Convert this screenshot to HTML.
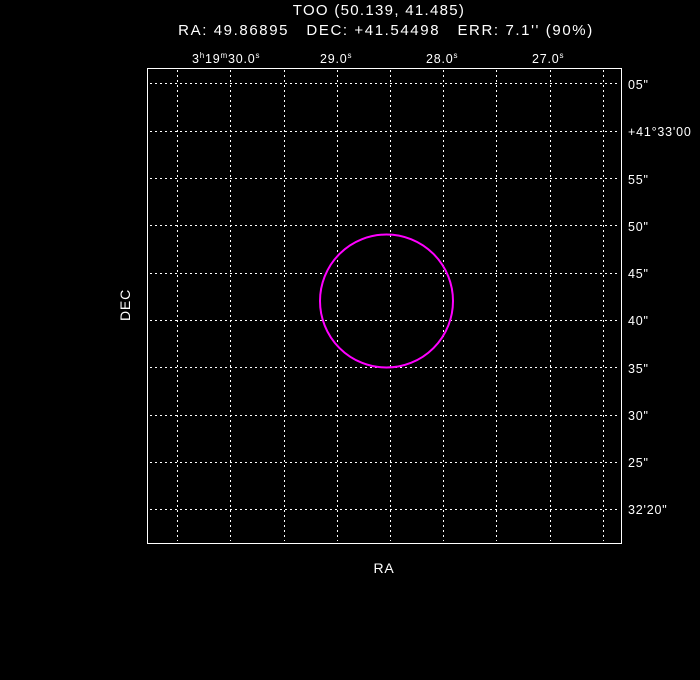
<!DOCTYPE html>
<html><head><style>
html,body{margin:0;padding:0;background:#000;width:700px;height:680px;overflow:hidden}
svg text{font-family:"Liberation Sans","DejaVu Sans",sans-serif;fill:#fff}
</style></head><body>
<svg width="700" height="680" xmlns="http://www.w3.org/2000/svg">
<text x="379" y="15" font-size="15" letter-spacing="1.3" text-anchor="middle">TOO (50.139, 41.485)</text>
<text x="386" y="35" font-size="15" letter-spacing="1.6" text-anchor="middle">RA: 49.86895&#160;&#160;&#160;DEC: +41.54498&#160;&#160;&#160;ERR: 7.1'' (90%)</text>
<g font-size="12.5" letter-spacing="0.8">
<text x="192" y="63">3<tspan font-size="8" dy="-5">h</tspan><tspan dy="5">19</tspan><tspan font-size="8" dy="-5">m</tspan><tspan dy="5">30.0</tspan><tspan font-size="8" dy="-5">s</tspan></text>
<text x="320" y="63">29.0<tspan font-size="8" dy="-5">s</tspan></text>
<text x="426" y="63">28.0<tspan font-size="8" dy="-5">s</tspan></text>
<text x="532" y="63">27.0<tspan font-size="8" dy="-5">s</tspan></text>
<text x="628" y="89">05"</text>
<text x="628" y="136">+41°33'00</text>
<text x="628" y="184">55"</text>
<text x="628" y="231">50"</text>
<text x="628" y="278">45"</text>
<text x="628" y="325">40"</text>
<text x="628" y="373">35"</text>
<text x="628" y="420">30"</text>
<text x="628" y="467">25"</text>
<text x="628" y="514">32'20"</text>
<text x="384" y="573" font-size="14" text-anchor="middle">RA</text>
<text x="0" y="0" font-size="14" text-anchor="middle" transform="translate(130,305) rotate(-90)">DEC</text>
</g>
<g stroke="#fff" stroke-width="1" stroke-dasharray="2,3">
<line x1="177.5" y1="70" x2="177.5" y2="541"/>
<line x1="230.5" y1="70" x2="230.5" y2="541"/>
<line x1="284.5" y1="70" x2="284.5" y2="541"/>
<line x1="337.5" y1="70" x2="337.5" y2="541"/>
<line x1="390.5" y1="70" x2="390.5" y2="541"/>
<line x1="443.5" y1="70" x2="443.5" y2="541"/>
<line x1="496.5" y1="70" x2="496.5" y2="541"/>
<line x1="550.5" y1="70" x2="550.5" y2="541"/>
<line x1="603.5" y1="70" x2="603.5" y2="541"/>
<line x1="150" y1="83.5" x2="620" y2="83.5"/>
<line x1="150" y1="131.5" x2="620" y2="131.5"/>
<line x1="150" y1="178.5" x2="620" y2="178.5"/>
<line x1="150" y1="225.5" x2="620" y2="225.5"/>
<line x1="150" y1="273.5" x2="620" y2="273.5"/>
<line x1="150" y1="320.5" x2="620" y2="320.5"/>
<line x1="150" y1="367.5" x2="620" y2="367.5"/>
<line x1="150" y1="415.5" x2="620" y2="415.5"/>
<line x1="150" y1="462.5" x2="620" y2="462.5"/>
<line x1="150" y1="509.5" x2="620" y2="509.5"/>
</g>
<rect x="147.5" y="68.5" width="474" height="475" fill="none" stroke="#fff" stroke-width="1"/>
<circle cx="386.5" cy="301" r="66.5" fill="none" stroke="#ff00ff" stroke-width="2"/>
</svg>
</body></html>
